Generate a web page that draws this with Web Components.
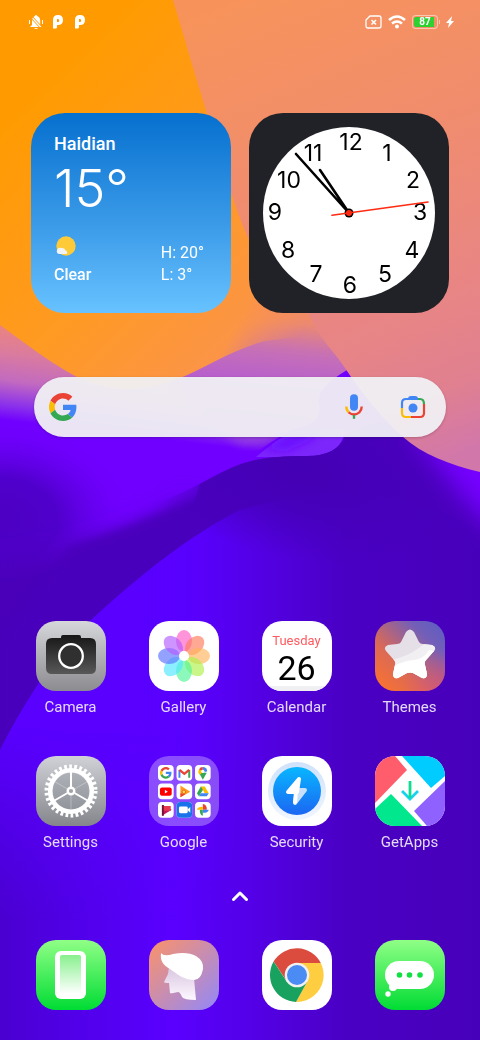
<!DOCTYPE html>
<html lang="en">
<head>
<meta charset="utf-8">
<meta name="viewport" content="width=device-width, initial-scale=1">
<title>Home</title>
<style>
  body {
    margin: 0;
    background: #4a00bc;
    color: white;
    font-family: Roboto, "Noto Sans", sans-serif;
  }
</style>
</head>
<body>
<home-screen>
  <status-bar slot="status" battery="87"></status-bar>
  <weather-widget slot="widgets" city="Haidian" temp="15°" state="Clear" high="H: 20°" low="L: 3°"></weather-widget>
  <clock-widget slot="widgets"></clock-widget>
  <search-bar slot="search"></search-bar>
  <app-icon slot="apps" icon="camera" label="Camera"></app-icon>
  <app-icon slot="apps" icon="gallery" label="Gallery"></app-icon>
  <app-icon slot="apps" icon="calendar" label="Calendar"><calendar-tile day="Tuesday" date="26"></calendar-tile></app-icon>
  <app-icon slot="apps" icon="themes" label="Themes"></app-icon>
  <app-icon slot="apps" icon="settings" label="Settings"></app-icon>
  <app-icon slot="apps" icon="folder" label="Google"></app-icon>
  <app-icon slot="apps" icon="security" label="Security"></app-icon>
  <app-icon slot="apps" icon="getapps" label="GetApps"></app-icon>
  <app-icon slot="dock" icon="phone" name="Phone"></app-icon>
  <app-icon slot="dock" icon="assistant" name="Assistant"></app-icon>
  <app-icon slot="dock" icon="chrome" name="Chrome"></app-icon>
  <app-icon slot="dock" icon="messages" name="Messages"></app-icon>
</home-screen>

<script>
// google "G", drawn on a 48 unit grid, used by the search bar and the folder
const G_LOGO = `
  <path fill="#ea4335" d="M24 9.5c3.54 0 6.71 1.22 9.21 3.6l6.85-6.85C35.9 2.38 30.47 0 24 0 14.62 0 6.51 5.38 2.56 13.22l7.98 6.19C12.43 13.72 17.74 9.5 24 9.5z"/>
  <path fill="#4285f4" d="M46.98 24.55c0-1.57-.15-3.09-.38-4.55H24v9.02h12.94c-.58 2.96-2.26 5.48-4.78 7.18l7.73 6c4.51-4.18 7.09-10.36 7.09-17.65z"/>
  <path fill="#fbbc05" d="M10.53 28.59c-.48-1.45-.76-2.99-.76-4.59s.27-3.14.76-4.59l-7.98-6.19C.92 16.46 0 20.12 0 24s.92 7.54 2.56 10.78l7.97-6.19z"/>
  <path fill="#34a853" d="M24 48c6.48 0 11.93-2.13 15.89-5.81l-7.73-6c-2.15 1.45-4.92 2.3-8.16 2.3-6.26 0-11.57-4.22-13.47-9.91l-7.98 6.19C6.51 42.62 14.62 48 24 48z"/>`;

const petals = ['#ff5cc8', '#ff7d5c', '#ffb45c', '#aef24a', '#50f59a', '#50e6ff', '#5c72ff', '#b45cff']
  .map((c, i) => `<ellipse cx="35" cy="20" rx="8" ry="11" fill="${c}" fill-opacity=".66" transform="rotate(${i * 45} 35 35)"/>`)
  .join('');

// 16 unit drawings of the apps inside the folder, row by row
const folderApps = [
  `<g transform="translate(2 2) scale(.25)">${G_LOGO}</g>`,
  `<path fill="#4285f4" d="M2 5h2v8H2z"/><path fill="#34a853" d="M12 5h2v8h-2z"/><path fill="none" stroke="#ea4335" stroke-width="2.4" d="M3 5l5 4 5-4"/>`,
  `<path fill="#34a853" d="M8 15L4 8h8z"/><path fill="#4285f4" d="M8 2a4.5 4.5 0 0 1 4.5 4.5L8 8z"/><path fill="#ea4335" d="M8 2a4.5 4.5 0 0 0-4 2.5L8 7z"/><path fill="#fbbc05" d="M4 4.500A4.500 4.500 0 0 0 5 10l4-4z"/><circle cx="8" cy="6.500" r="1.700" fill="#fff"/>`,
  `<rect x="2" y="4" width="12" height="8.500" rx="2" fill="#f00"/><path fill="#fff" d="M7 6.500l3 1.800-3 1.800z"/>`,
  `<path fill="#ff9a1f" d="M4 2l10 6.500L4 14z"/><path fill="#ea4335" d="M4 10l5 1-5 3z"/><circle cx="7.500" cy="8.500" r="1.800" fill="#ffdf4d" stroke="#ea6a1f"/>`,
  `<path fill="#34a853" d="M6 3L2 10l2 3 5-8z"/><path fill="#fbbc05" d="M6 3h4l4 7h-4z"/><path fill="#4285f4" d="M4 13h8l2-3H6z"/>`,
  `<path fill="#c2185b" d="M4 3l10 5-10 6z"/><path fill="#7b1234" d="M4 3h2v11H4z"/><path fill="#e63950" d="M6 4h7v5H6z"/>`,
  `<rect width="16" height="16" rx="4" fill="#1a73e8"/><rect x="2.500" y="4.500" width="9" height="7" rx="1.500" fill="#fff"/><path fill="#fff" d="M11 8l3-3v6z"/>`,
  `<path fill="#ea4335" d="M8 2v6h4a4 5 0 0 0-4-6z"/><path fill="#4285f4" d="M14 8H8v3a5 3 0 0 0 6-3z"/><path fill="#34a853" d="M8 14V8H5a3 5 0 0 0 3 6z"/><path fill="#fbbc05" d="M2 8h6V5a5 3 0 0 0-6 3z"/>`
];

const folderGrid = folderApps.map((art, i) => `
  <g transform="translate(${9 + (i % 3) * 18.5} ${9 + Math.floor(i / 3) * 18.5}) scale(.98)">
    <rect width="16" height="16" rx="4" fill="#fff"/>${art}
  </g>`).join('');

// every icon fills a 70x70 tile
const ICONS = {
  camera: `
    <linearGradient id="bg" x2="0" y2="1"><stop stop-color="#d6d7db"/><stop offset="1" stop-color="#8b8b90"/></linearGradient>
    <linearGradient id="body" x2="0" y2="1"><stop stop-color="#161616"/><stop offset="1" stop-color="#585858"/></linearGradient>
    <path fill="url(#bg)" d="M0 0h70v70H0z"/>
    <path fill="url(#body)" d="M16 17h9v-1q0-2 2-2h16q2 0 2 2v1h9q6 0 6 6v24q0 6-6 6H16q-6 0-6-6V23q0-6 6-6z"/>
    <circle cx="35" cy="35" r="11.800" fill="#303030" stroke="#fff" stroke-width="2.300"/>`,
  gallery: `
    <path fill="#fff" d="M0 0h70v70H0z"/>
    <g style="mix-blend-mode: multiply">${petals}</g>
    <circle cx="35" cy="35" r="5" fill="#fff"/>`,
  calendar: `
    <path fill="#fff" d="M0 0h70v70H0z"/><path fill="#f0f0f2" d="M0 65h70v5H0z"/>`,
  themes: `
    <linearGradient id="bg" y1="1" x2="1" y2="0"><stop stop-color="#ff7428"/><stop offset=".35" stop-color="#dc6a55"/><stop offset=".75" stop-color="#735fb8"/><stop offset="1" stop-color="#5a5cc4"/></linearGradient>
    <radialGradient id="pink" cx="1" cy="1" r=".6"><stop stop-color="#e05078" stop-opacity=".7"/><stop offset="1" stop-color="#e05078" stop-opacity="0"/></radialGradient>
    <clipPath id="star"><path d="M31 11q4-5 8 0l5 10q1 2 4 2l9 1q5 2 2 6l-8 9q-2 2-1 5l2 9q0 5-5 4l-9-5q-3-1-6 0l-9 5q-5 1-5-4l2-9q1-3-1-5l-8-9q-3-4 2-6l9-1q3 0 4-2z"/></clipPath>
    <path fill="url(#bg)" d="M0 0h70v70H0z"/><path fill="url(#pink)" d="M0 0h70v70H0z"/>
    <g clip-path="url(#star)"><path fill="#e5e0e7" d="M0 0h70v70H0z"/><path fill="#f2eff3" d="M16 39q13-3 20-7t16-11h18v49H0z"/><path fill="#fff" d="M16 46q16-7 23-7 10-1 15-10l16 4v37H0z"/></g>`,
  settings: `
    <linearGradient id="bg" x2="0" y2="1"><stop stop-color="#d0d2d8"/><stop offset="1" stop-color="#84868c"/></linearGradient>
    <path fill="url(#bg)" d="M0 0h70v70H0z"/>
    <circle cx="35" cy="35" r="18" fill="#8c8f98" fill-opacity=".3"/>
    <g fill="none" stroke="#fff">
      <circle cx="35" cy="35" r="24" stroke-width="5" stroke-dasharray="2.700 2.327"/>
      <circle cx="35" cy="35" r="20.800" stroke-width="4.600"/>
      <circle cx="35" cy="35" r="3.300" stroke-width="2.400"/>
      <path stroke-width="2" d="M35 31V16M31.500 37L18.500 44.500M38.500 37l13 7.500"/>
      <path stroke-width="1" stroke-opacity=".3" d="M35 39v15M31.500 33L18.500 25.500M38.500 33l13-7.500"/>
    </g>`,
  folder: `<path fill="#fff" fill-opacity=".3" d="M0 0h70v70H0z"/>${folderGrid}`,
  security: `
    <linearGradient id="disc" x2="0" y2="1"><stop stop-color="#08b6ff"/><stop offset="1" stop-color="#1c66f2"/></linearGradient>
    <path fill="#fff" d="M0 0h70v70H0z"/>
    <linearGradient id="halo" x2="0" y2="1"><stop stop-color="#cfe2fb"/><stop offset="1" stop-color="#f0f6ff"/></linearGradient>
    <circle cx="35" cy="35" r="29" fill="url(#halo)"/><circle cx="35" cy="35" r="24" fill="url(#disc)"/>
    <g stroke-width="4" stroke-linejoin="round">
      <path fill="#c8e0fc" stroke="#c8e0fc" d="M35 34h8L33 47z"/>
      <path fill="#fff" stroke="#fff" d="M37 23L26 36h9z"/>
      <path fill="none" stroke="#fff" stroke-linecap="round" d="M34 36l-1 10"/>
    </g>`,
  getapps: `
    <path fill="#fff" d="M0 0h70v70H0z"/>
    <path fill="#ff5c6c" d="M0 0h20l12 14L0 47z"/><path fill="#00ccff" d="M27 0h43v20L56 32z"/>
    <path fill="#00e78d" d="M16 38l31 32H0V53z"/><path fill="#8f62ff" d="M70 25v45H52L39 55z"/>
    <g fill="none" stroke-width="2.800"><path stroke="#16d2ee" d="M27 35l8 8 8-8"/><path stroke="#10dc90" d="M35 25v17"/></g>`,
  phone: `
    <linearGradient id="bg" x2="0" y2="1"><stop stop-color="#90ff86"/><stop offset="1" stop-color="#00dc34"/></linearGradient>
    <linearGradient id="screen" x2="0" y2="1"><stop stop-color="#88f08e"/><stop offset="1" stop-color="#fff"/></linearGradient>
    <path fill="url(#bg)" d="M0 0h70v70H0z"/>
    <rect x="19" y="11" width="31" height="48" rx="6" fill="#fff"/><rect x="24" y="15" width="21" height="39" rx="2" fill="url(#screen)"/>`,
  assistant: `
    <linearGradient id="bg" x2="1" y2="1"><stop stop-color="#fc9268"/><stop offset="1" stop-color="#9288fa"/></linearGradient>
    <linearGradient id="face" x2="0" y2="1"><stop stop-color="#d9c5e0"/><stop offset="1" stop-color="#fdf8ff"/></linearGradient>
    <path fill="url(#bg)" d="M0 0h70v70H0z"/>
    <path fill="url(#face)" d="M20 27l-1 7-4 8q0 1 5 1l1 10q0 1 8-1 2 0 4 5 2 3 14 3l-2-22z"/>
    <path fill="#fff" d="M12 13q3 4 12 1 14-3 23 2 8 5 7 13-2 11-9 11c-10 0-17-6-24-11-7-4-10-8-9-16z"/>`,
  chrome: `
    <path fill="#fff" d="M0 0h70v70H0z"/>
    <path fill="#db4c3f" d="M11.600 21.500A27 27 0 0 1 58.800 23H35L24.600 41z"/>
    <path fill="#ffcd40" d="M58.800 23A27 27 0 0 1 34 62l11.400-21L35 23z"/>
    <path fill="#19a25f" d="M11.600 21.500A27 27 0 0 0 34 62l11-20H25z"/>
    <circle cx="35" cy="35" r="12.300" fill="#f1f1f1"/><circle cx="35" cy="35" r="10" fill="#4b8bf4"/>`,
  messages: `
    <linearGradient id="bg" x2="0" y2="1"><stop stop-color="#90ff86"/><stop offset="1" stop-color="#00dc34"/></linearGradient>
    <path fill="url(#bg)" d="M0 0h70v70H0z"/>
    <g fill="#fff"><rect x="10" y="21" width="49" height="28" rx="14"/><circle cx="18" cy="47" r="4"/><circle cx="13" cy="54" r="2.700"/></g>
    <g fill="#10e044"><circle cx="24.500" cy="35" r="2.800"/><circle cx="34.500" cy="35" r="2.800"/><circle cx="45" cy="35" r="2.800"/></g>`
};

class HomeScreen extends HTMLElement {
  constructor() {
    super();
    this.attachShadow({mode: 'open'}).innerHTML = `
      <style>
        :host {
          display: flex;
          flex-direction: column;
          position: relative;
          z-index: 0;
          min-height: 100vh;
          box-sizing: border-box;
          padding-bottom: 30px;
          overflow: hidden;
        }
        home-wallpaper {
          position: absolute;
          inset: 0;
          z-index: -1;
        }
        .widgets {
          display: grid;
          grid-template-columns: 1fr 1fr;
          gap: 18px;
          padding: 69px 31px 64px;
        }
        .search {
          padding: 0 34px;
        }
        .apps, .dock {
          display: grid;
          grid-template-columns: repeat(4, 1fr);
          gap: 39px 0;
          padding: 0 14px;
        }
        .apps {
          margin-top: auto;
        }
        .drawer {
          display: flex;
          align-self: center;
          margin: 32px 0;
          padding: 0;
          border: 0;
          background: none;
        }
      </style>
      <home-wallpaper></home-wallpaper>
      <slot name="status"></slot>
      <main class="widgets"><slot name="widgets"></slot></main>
      <div class="search"><slot name="search"></slot></div>
      <nav class="apps"><slot name="apps"></slot></nav>
      <button class="drawer" aria-label="All apps">
        <svg width="24" height="24" fill="none" stroke="#fff" stroke-width="3" stroke-linecap="round" stroke-linejoin="round"><path d="M5.500 15.500L12 9l6.500 6.500"/></svg>
      </button>
      <nav class="dock"><slot name="dock"></slot></nav>`;
  }
}

class HomeWallpaper extends HTMLElement {
  constructor() {
    super();
    this.attachShadow({mode: 'open'}).innerHTML = `
      <style>
        :host { display: block; }
        svg { display: block; width: 100%; height: 100%; }
      </style>
      <svg viewBox="0 0 480 1040" preserveAspectRatio="xMidYMid slice" aria-hidden="true">
        <defs>
          <linearGradient id="dusk" gradientUnits="userSpaceOnUse" x1="0" y1="320" x2="-12" y2="418">
            <stop stop-color="#ee8578"/><stop offset=".3" stop-color="#dc7c9c"/><stop offset=".6" stop-color="#c26ac0"/><stop offset=".85" stop-color="#8a30ec"/><stop offset="1" stop-color="#7000ff"/>
          </linearGradient>
          <linearGradient id="orange" gradientUnits="userSpaceOnUse" x1="0" y1="120" x2="260" y2="390">
            <stop stop-color="#ff9b00"/><stop offset=".5" stop-color="#ff9a22"/><stop offset="1" stop-color="#fa9255"/>
          </linearGradient>
          <linearGradient id="toRight" gradientUnits="userSpaceOnUse" x1="250" y1="300" x2="305" y2="330">
            <stop stop-color="#fff"/><stop offset="1" stop-color="#000"/>
          </linearGradient>
          <mask id="orangeFade"><path fill="url(#toRight)" d="M0 0h480v480H0z"/></mask>
          <linearGradient id="salmon" gradientUnits="userSpaceOnUse" x1="230" y1="0" x2="420" y2="470">
            <stop stop-color="#f7935a"/><stop offset=".35" stop-color="#f18d6c"/><stop offset=".7" stop-color="#e88585"/><stop offset=".87" stop-color="#e08090"/><stop offset="1" stop-color="#d277aa"/>
          </linearGradient>
          <linearGradient id="bottom" x2="1" y2="0">
            <stop stop-color="#4a00d0"/><stop offset=".18" stop-color="#5200ec"/><stop offset=".36" stop-color="#5900ff"/><stop offset=".52" stop-color="#5400e8"/><stop offset=".72" stop-color="#4a00c4"/><stop offset="1" stop-color="#4700ba"/>
          </linearGradient>
          <linearGradient id="leftGlow" gradientUnits="userSpaceOnUse" x1="0" y1="720" x2="0" y2="920">
            <stop stop-color="#5900ff"/><stop offset="1" stop-color="#5900ff" stop-opacity="0"/>
          </linearGradient>
          <linearGradient id="glowSide" gradientUnits="userSpaceOnUse" x1="130" y1="0" x2="250" y2="0">
            <stop stop-color="#fff"/><stop offset="1" stop-color="#000"/>
          </linearGradient>
          <mask id="glowMask"><path fill="url(#glowSide)" d="M0 480h480v560H0z"/></mask>
          <radialGradient id="shade" gradientUnits="userSpaceOnUse" cx="0" cy="0" r="1" gradientTransform="translate(300 470) rotate(12) scale(190 90)">
            <stop stop-color="#4400b4"/><stop offset=".4" stop-color="#4600b9" stop-opacity=".9"/><stop offset="1" stop-color="#4700bc" stop-opacity="0"/>
          </radialGradient>
          <linearGradient id="orchid" gradientUnits="userSpaceOnUse" x1="280" y1="318" x2="268" y2="446">
            <stop stop-color="#f08c68"/><stop offset=".25" stop-color="#c670b6"/><stop offset=".5" stop-color="#b85fcc"/><stop offset="1" stop-color="#9038e4"/>
          </linearGradient>
          <radialGradient id="leftDark" gradientUnits="userSpaceOnUse" cx="0" cy="0" r="1" gradientTransform="translate(0 520) scale(130 95)">
            <stop stop-color="#4c00c2"/><stop offset=".45" stop-color="#5000cc"/><stop offset="1" stop-color="#6a00f4" stop-opacity="0"/>
          </radialGradient>
          <clipPath id="dune"><path d="M480 420h-70q-40 0-65 16-8 20-38 20c-60 0-70 8-115 32L0 580v250h480z"/></clipPath>
          <filter id="soft" x="-40%" y="-40%" width="180%" height="180%"><feGaussianBlur stdDeviation="12"/></filter>
          <filter id="softer" x="-30%" y="-30%" width="160%" height="160%"><feGaussianBlur stdDeviation="5"/></filter>
        </defs>
        <path fill="#7000ff" d="M0 0h480v1040H0z"/>
        <path fill="url(#dusk)" d="M0 250h480v200H0z"/>
        <path fill="url(#leftDark)" d="M0 420h140v200H0z"/>
        <path fill="url(#orchid)" filter="url(#softer)" d="M170 385l60-75h130v70l-60 64h-60l-30-20z"/>
        <path fill="#7000ff" d="M347 370q10 15 65 70l-60 20h-30l-70-4q20-16 42-27 30-6 25-25-4-15 28-34z"/>
        <path fill="#7c26fb" d="M256 457q24-20 40-28l49 0q-4 30-40 28z"/>
        <path fill="#6c0cff" filter="url(#softer)" d="M262 450q22-17 45-19l10 6-30 14z"/>
        <path fill="#4800b8" filter="url(#soft)" d="M190 500Q100 555-40 565v260l260-240z"/>
        <path fill="#4a00bc" filter="url(#softer)" d="M215 486Q150 522 70 546L0 640v100l240-180z"/>
        <path fill="#4a00bc" d="M480 436H345q-8 20-38 20c-55 0-68 8-107 28l-10 30v100h290z"/>
        <path fill="url(#bottom)" d="M0 750C20 710 60 645 90 621c50-46 100-86 150-111q130-40 240 20v510H0z"/>
        <path fill="url(#leftGlow)" mask="url(#glowMask)" d="M0 750C20 710 60 645 90 621c50-46 100-86 150-111v430H0z"/>
        <g clip-path="url(#dune)">
          <path fill="url(#shade)" d="M0 360h480v260H0z"/>
          <path fill="#7400ff" filter="url(#soft)" d="M410 430l100 20v90q-30-20-60-60z"/>
        </g>
        <path fill="url(#orange)" mask="url(#orangeFade)" d="M0 0h330v332q-30 5-65 9c-30 8-50 21-80 35-45 18-75 17-110 0C45 359 25 343 0 325z"/>
        <path fill="url(#salmon)" d="M173 0h307v472c-30-7-58-18-77-35-22-20-40-42-56-66-14-22-28-32-37-55C290 270 265 300 232 195 218 150 195 75 173 0z"/>
      </svg>`;
  }
}

class StatusBar extends HTMLElement {
  connectedCallback() {
    this.attachShadow({mode: 'open'}).innerHTML = `
      <style>
        :host {
          display: flex;
          justify-content: space-between;
          align-items: center;
          height: 44px;
          padding: 0 26px 0 28px;
        }
        div { display: flex; align-items: center; }
        .left { gap: 6px; }
        .right { gap: 6px; }
        .battery {
          display: flex;
          align-items: center;
          gap: 1px;
        }
        .level {
          width: 22px;
          height: 10px;
          border: 1px solid #ffffff80;
          border-radius: 4px;
          padding: 1px;
          background: linear-gradient(90deg, #2fd032 90%, transparent 0) content-box;
          font-size: 10px;
          line-height: 10px;
          font-weight: 700;
          text-align: center;
        }
        .cap {
          width: 1px;
          height: 4px;
          background: #ffffff80;
        }
      </style>
      <div class="left">
        <svg width="16" height="16" viewBox="0 0 16 16" fill="#fff"><path d="M8 1q1 0 1.200 1 3 1 3 5v4l2 2H2l2-2V7q0-4 3-5Q7 1 8 1zM6 14h4q-2 2-4 0zM1 6h1v4H1zM14 6h1v4h-1z"/><path stroke="#ff9b0c" stroke-width="1" d="M2 3l12 13M4 2l11 12"/></svg>
        <svg width="16" height="16" viewBox="0 0 16 16" fill="#fff" fill-rule="evenodd"><path d="M3 14.500V6q0-5 5-5t5 5-5 5H7v2q0 1.500-1.500 1.500zM7 5v3h1q1.200 0 1.200-1.500T8 5z"/></svg>
        <svg width="16" height="16" viewBox="0 0 16 16" fill="#fff" fill-rule="evenodd"><path d="M3 14.500V6q0-5 5-5t5 5-5 5H7v2q0 1.500-1.500 1.500zM7 5v3h1q1.200 0 1.200-1.500T8 5z"/></svg>
      </div>
      <div class="right">
        <svg width="17" height="14" viewBox="0 0 17 14" fill="none" stroke="#fff" stroke-width="1.300"><path d="M5 1h9q2 0 2 2v8q0 2-2 2H3q-2 0-2-2V5z"/><path stroke-width="1.600" d="M6.500 5l4.500 4.500M11 5L6.500 9.500"/></svg>
        <svg width="18" height="14" viewBox="0 0 18 14" fill="none" stroke="#fff" stroke-width="2.600"><path d="M1 5q8-7 16 0M4 8.500q5-4 10 0"/><circle cx="9" cy="11.500" r="2" fill="#fff" stroke="none"/></svg>
        <span class="battery"><span class="level">${this.getAttribute('battery')}</span><span class="cap"></span></span>
        <svg width="8" height="12" viewBox="0 0 8 12" fill="#fff"><path d="M6 0L0 7h3l-1 5 6-7H5z"/></svg>
      </div>`;
  }
}

class WeatherWidget extends HTMLElement {
  connectedCallback() {
    this.attachShadow({mode: 'open'}).innerHTML = `
      <style>
        :host {
          display: flex;
          flex-direction: column;
          box-sizing: border-box;
          aspect-ratio: 1;
          padding: 20px 27px 27px 23px;
          border-radius: 34px;
          background: linear-gradient(#0670cf, #3a9ae8 55%, #68c2ff);
        }
        .city {
          font-size: 18px;
          line-height: 22px;
          font-weight: 500;
        }
        .temp {
          margin-top: 4px;
          font-family: Inter, Roboto, sans-serif;
          font-size: 52px;
          line-height: 60px;
          font-weight: 300;
        }
        .bottom {
          display: flex;
          justify-content: space-between;
          align-items: flex-end;
          margin-top: auto;
          font-size: 16px;
          line-height: 22px;
        }
        .state { font-weight: 500; }
        svg { display: block; margin-bottom: 7px; }
      </style>
      <div class="city">${this.getAttribute('city')}</div>
      <div class="temp">${this.getAttribute('temp')}</div>
      <div class="bottom">
        <div class="state">
          <svg width="22" height="22"><circle cx="12" cy="11" r="9.700" fill="#ffca38"/><path fill="#f1f3f4" d="M5 19q-3-1-2-4t5-2q3 0 3 2 3 1 2 4z"/></svg>
          ${this.getAttribute('state')}
        </div>
        <div>${this.getAttribute('high')}<br>${this.getAttribute('low')}</div>
      </div>`;
  }
}

class ClockWidget extends HTMLElement {
  connectedCallback() {
    // centres of the numerals 1 to 12 on the 200 unit face
    const spots = [[138, 40], [164, 67], [171, 99], [163, 137], [136, 161], [101, 172],
      [67, 161], [39, 137], [26, 99], [40, 67], [64, 40], [102, 29]];
    const numerals = spots.map(([x, y], i) => `<text x="${x}" y="${y + 8}">${i + 1}</text>`).join('');
    this.attachShadow({mode: 'open'}).innerHTML = `
      <style>
        :host {
          display: block;
          aspect-ratio: 1;
          border-radius: 34px;
          background: #212227;
        }
        svg { display: block; width: 100%; height: 100%; }
        text {
          font: 400 23px Inter, "Liberation Sans", sans-serif;
          text-anchor: middle;
        }
      </style>
      <svg viewBox="0 0 200 200" role="img" aria-label="Clock">
        <circle cx="100" cy="100" r="86" fill="#fff"/>
        ${numerals}
        <g stroke-linecap="round">
          <path stroke="#000" stroke-width="2.600" d="M100 100L47 41M100 100L71 57"/>
          <circle cx="100" cy="100" r="4.500"/>
          <path stroke="#ff2a12" stroke-width="1.600" d="M83 102.300L179 89"/>
          <circle cx="100" cy="100" r="3" fill="#ff2a12"/>
        </g>
      </svg>`;
  }
}

class SearchBar extends HTMLElement {
  constructor() {
    super();
    this.attachShadow({mode: 'open'}).innerHTML = `
      <style>
        :host {
          display: flex;
          align-items: center;
          box-sizing: border-box;
          height: 60px;
          padding: 0 19px 0 15px;
          border-radius: 30px;
          background: #f0f0f3f2;
          box-shadow: 0 1px 3px #0003;
        }
        input {
          flex: 1;
          min-width: 0;
          padding: 0 12px;
          border: 0;
          outline: 0;
          background: none;
          font: 16px Roboto, sans-serif;
        }
        button {
          display: flex;
          padding: 0;
          border: 0;
          background: none;
        }
        .mic { margin-right: 30px; }
      </style>
      <svg width="28" height="28" viewBox="0 0 48 48">${G_LOGO}</svg>
      <input type="search" aria-label="Search">
      <button class="mic" aria-label="Voice search">
        <svg width="30" height="30" viewBox="0 0 28 28" fill="none" stroke-width="2.200">
          <rect x="10.300" y="2" width="7.400" height="15.500" rx="3.700" fill="#4285f4"/>
          <path stroke="#fbbc05" d="M6.800 13.500q0 3.500 2.400 5.500"/><path stroke="#ea4335" d="M9 19q5 4 10 0 2.200-2 2.200-5.500"/><path stroke="#34a853" d="M14 21.500V25"/>
        </svg>
      </button>
      <button aria-label="Search with camera">
        <svg width="28" height="28" viewBox="0 0 28 28" fill="none" stroke-width="2.200">
          <path fill="#4285f4" d="M9 6q0-3 3-3h4q3 0 3 3v1H9z"/>
          <path stroke="#4285f4" d="M3 15v-5q0-4 4-4h13"/><path stroke="#34a853" d="M19 6h2q4 0 4 5"/>
          <path stroke="#ea4335" d="M25 11v9q0 4-4 4h-9"/><path stroke="#fbbc05" d="M12 24H7q-4 0-4-4v-5"/>
          <circle cx="14" cy="15" r="4.500" fill="#4285f4"/>
        </svg>
      </button>`;
  }
}

class AppIcon extends HTMLElement {
  connectedCallback() {
    const label = this.getAttribute('label');
    this.attachShadow({mode: 'open'}).innerHTML = `
      <style>
        :host { display: block; }
        a {
          display: flex;
          flex-direction: column;
          align-items: center;
          gap: 6px;
          color: #ffffffd9;
          font-size: 15px;
          line-height: 20px;
          text-decoration: none;
        }
        .tile {
          display: grid;
          width: 70px;
          height: 70px;
          border-radius: 20px;
          overflow: hidden;
        }
        svg, ::slotted(*) { grid-area: 1 / 1; }
      </style>
      <a href="#" aria-label="${label || this.getAttribute('name')}">
        <span class="tile">
          <svg width="70" height="70" viewBox="0 0 70 70" aria-hidden="true">${ICONS[this.getAttribute('icon')]}</svg>
          <slot></slot>
        </span>
        ${label ? `<span>${label}</span>` : ''}
      </a>`;
  }
}

class CalendarTile extends HTMLElement {
  connectedCallback() {
    this.attachShadow({mode: 'open'}).innerHTML = `
      <style>
        :host {
          display: flex;
          flex-direction: column;
          align-items: center;
          padding-top: 12px;
          color: black;
        }
        .day {
          font-size: 13px;
          line-height: 16px;
          color: #ff5a5f;
        }
        .date {
          font-size: 34px;
          line-height: 38px;
        }
      </style>
      <span class="day">${this.getAttribute('day')}</span>
      <span class="date">${this.getAttribute('date')}</span>`;
  }
}

customElements.define('home-wallpaper', HomeWallpaper);
customElements.define('home-screen', HomeScreen);
customElements.define('status-bar', StatusBar);
customElements.define('weather-widget', WeatherWidget);
customElements.define('clock-widget', ClockWidget);
customElements.define('search-bar', SearchBar);
customElements.define('calendar-tile', CalendarTile);
customElements.define('app-icon', AppIcon);
</script>
</body>
</html>
